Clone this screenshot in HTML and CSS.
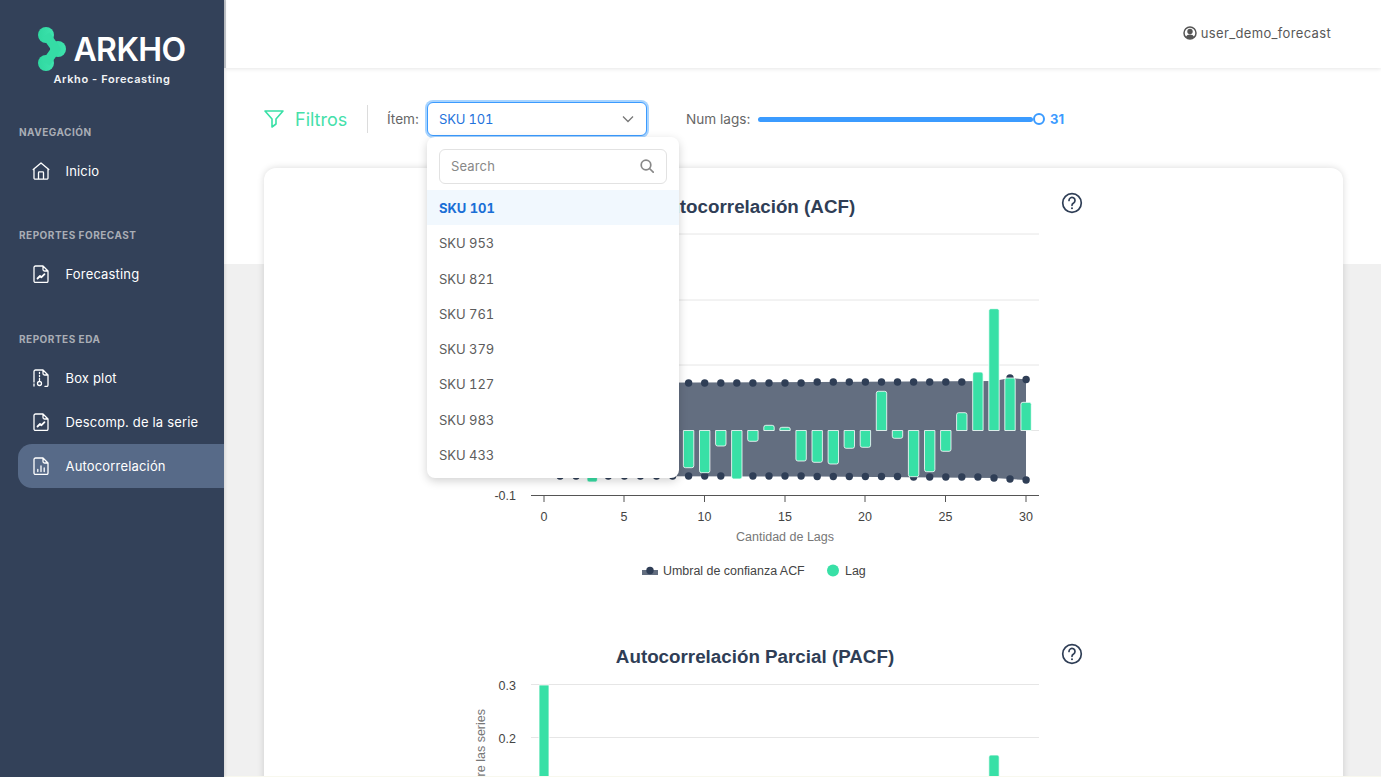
FILE: index.html
```html
<!DOCTYPE html>
<html lang="es">
<head>
  <meta charset="UTF-8">
  <title>Arkho - Forecasting</title>
  <link rel="stylesheet" href="styles.css">
</head>
<body>
  <aside class="sidebar">
    <div class="brand">
      <div class="brand-logo">
        <svg class="brand-mark" viewBox="0 0 28 44" width="28" height="44">
          <defs>
            <linearGradient id="markGrad" x1="0" y1="0" x2="1" y2="0">
              <stop offset="0" stop-color="#2fd8a0"/>
              <stop offset="1" stop-color="#3fe3ae"/>
            </linearGradient>
          </defs>
          <g fill="url(#markGrad)">
            <circle cx="8" cy="8" r="8"/>
            <circle cx="20" cy="22" r="8"/>
            <circle cx="8" cy="36" r="8"/>
          </g>
          <path d="M8 8 L18 22 L8 36" fill="none" stroke="#35dca5" stroke-width="9" stroke-linejoin="round"/>
        </svg>
        <span class="brand-name">ARKHO</span>
      </div>
      <div class="brand-sub">Arkho - Forecasting</div>
    </div>

    <div class="nav-section">
      <div class="nav-label">NAVEGACIÓN</div>
      <a class="nav-item">
        <svg class="nav-icon" viewBox="0 0 18 18"><path d="M1.2 7.600 9 1l7.800 6.600M2 7v9a1.200 1.200 0 0 0 1.200 1.200h11.600A1.200 1.200 0 0 0 16 16V7M6.500 17v-6.300a.8.8 0 0 1 .8-.8h3.400a.8.8 0 0 1 .8.8V17"/></svg>
        Inicio
      </a>
    </div>

    <div class="nav-section">
      <div class="nav-label">REPORTES FORECAST</div>
      <a class="nav-item">
        <svg class="nav-icon" viewBox="0 0 18 18"><path d="M2 2.500A1.500 1.500 0 0 1 3.500 1H11l5 5v10a1.500 1.500 0 0 1-1.500 1.500h-11A1.500 1.500 0 0 1 2 16zM11 1v3.500A1.500 1.500 0 0 0 12.500 6H16"/><path class="nav-icon-bold" d="M5.500 13.500l2.500-2.500 1.500 1.200 3-3"/></svg>
        Forecasting
      </a>
    </div>

    <div class="nav-section">
      <div class="nav-label">REPORTES EDA</div>
      <a class="nav-item">
        <svg class="nav-icon" viewBox="0 0 18 18"><path d="M2 13V2.500A1.500 1.500 0 0 1 3.500 1H11l5 5v10a1.500 1.500 0 0 1-1.500 1.500H13M2 15v2M11 1v3.500A1.500 1.500 0 0 0 12.500 6H16"/><path d="M7.500 3.500v1M7.500 6.500v1M7.500 9.500v2"/><circle cx="7.500" cy="14.500" r="2"/></svg>
        Box plot
      </a>
      <a class="nav-item">
        <svg class="nav-icon" viewBox="0 0 18 18"><path d="M2 2.500A1.500 1.500 0 0 1 3.500 1H11l5 5v10a1.500 1.500 0 0 1-1.500 1.500h-11A1.500 1.500 0 0 1 2 16zM11 1v3.500A1.500 1.500 0 0 0 12.500 6H16"/><path class="nav-icon-bold" d="M5.500 13.500l2.500-2.500 1.500 1.200 3-3"/></svg>
        Descomp. de la serie
      </a>
      <a class="nav-item nav-item-active">
        <svg class="nav-icon" viewBox="0 0 18 18"><path d="M2 2.500A1.500 1.500 0 0 1 3.500 1H11l5 5v10a1.500 1.500 0 0 1-1.500 1.500h-11A1.500 1.500 0 0 1 2 16zM11 1v3.500A1.500 1.500 0 0 0 12.500 6H16"/><path d="M5.800 14.500v-2M9 14.500V9M12.200 14.500v-3.500"/></svg>
        Autocorrelación
      </a>
    </div>
  </aside>

  <div class="main">
    <header class="topbar">
      <svg class="user-icon" viewBox="0 0 14 14" width="14" height="14">
        <circle cx="7" cy="7" r="6" fill="none" stroke="#555" stroke-width="1.500"/>
        <circle cx="7" cy="5.500" r="2.700" fill="#555"/>
        <path d="M2.800 11c.8-1.700 2.400-2.500 4.200-2.500s3.400.8 4.200 2.500c-1 1.200-2.500 2-4.200 2s-3.200-.8-4.200-2z" fill="#555"/>
      </svg>
      <span class="user-name">user_demo_forecast</span>
    </header>

    <div class="content">
      <div class="filters">
        <div class="filters-title">
          <svg viewBox="0 0 20 18" width="20" height="18"><path d="M1 1h18l-7 8v5l-4 3V9z" fill="none" stroke="#38e0a6" stroke-width="1.600" stroke-linejoin="round"/></svg>
          <span>Filtros</span>
        </div>
        <div class="filters-divider"></div>
        <label class="filter-label">Ítem:</label>
        <div class="select-wrap">
          <div class="select-box">
            <span>SKU 101</span>
            <svg viewBox="0 0 12 8" width="12" height="8"><path d="M1 1.500l5 5 5-5" fill="none" stroke="#777" stroke-width="1.300"/></svg>
          </div>
          <div class="dropdown">
            <div class="dropdown-search">
              <span>Search</span>
              <svg viewBox="0 0 14 14" width="14" height="14"><circle cx="6" cy="6" r="4.800" fill="none" stroke="#888" stroke-width="1.700"/><path d="M9.500 9.500l3.700 3.700" stroke="#888" stroke-width="1.700" stroke-linecap="round"/></svg>
            </div>
            <div class="dropdown-option dropdown-option-active">SKU 101</div>
            <div class="dropdown-option">SKU 953</div>
            <div class="dropdown-option">SKU 821</div>
            <div class="dropdown-option">SKU 761</div>
            <div class="dropdown-option">SKU 379</div>
            <div class="dropdown-option">SKU 127</div>
            <div class="dropdown-option">SKU 983</div>
            <div class="dropdown-option">SKU 433</div>
          </div>
        </div>
        <label class="filter-label lags-label">Num lags:</label>
        <div class="slider">
          <div class="slider-track"></div>
          <div class="slider-handle"></div>
        </div>
        <span class="slider-value">31</span>
      </div>

      <section class="card">
        <div class="chart-row">
          <svg class="chart chart-acf" viewBox="471 190 570 400">
            <text class="chart-title" x="755" y="212.500">Autocorrelación (ACF)</text>
            <g class="grid">
              <path d="M531 234H1039M531 300H1039M531 365H1039M531 430.500H1039"/>
            </g>
            <path class="band" d="M560 383L817 382L994 381L1010 378L1026 379.500V480L1010 479L994 478L817 476.500L560 476Z"/>
            <g class="dots">
              <circle cx="688.600" cy="383"/><circle cx="704.700" cy="383"/><circle cx="720.800" cy="383"/><circle cx="736.800" cy="383"/><circle cx="752.900" cy="383"/><circle cx="769" cy="383"/><circle cx="785" cy="383"/><circle cx="801.100" cy="383"/><circle cx="817.200" cy="382"/><circle cx="833.300" cy="382"/><circle cx="849.300" cy="382"/><circle cx="865.400" cy="382"/><circle cx="881.500" cy="382"/><circle cx="897.500" cy="382"/><circle cx="913.600" cy="382"/><circle cx="929.700" cy="382"/><circle cx="945.800" cy="382"/><circle cx="961.800" cy="382"/><circle cx="1010" cy="378"/><circle cx="1026.100" cy="379.500"/>
              <circle cx="560.100" cy="476"/><circle cx="576.100" cy="476"/><circle cx="608.300" cy="476"/><circle cx="624.400" cy="476"/><circle cx="640.400" cy="476"/><circle cx="656.500" cy="476"/><circle cx="672.600" cy="476"/><circle cx="688.600" cy="476"/><circle cx="704.700" cy="476"/><circle cx="720.800" cy="476"/><circle cx="752.900" cy="476"/><circle cx="769" cy="476"/><circle cx="785" cy="476"/><circle cx="801.100" cy="476"/><circle cx="817.200" cy="476.500"/><circle cx="833.300" cy="476.500"/><circle cx="849.300" cy="476.500"/><circle cx="865.400" cy="476.500"/><circle cx="881.500" cy="476.500"/><circle cx="897.500" cy="476.500"/><circle cx="913.600" cy="477"/><circle cx="929.700" cy="477"/><circle cx="945.800" cy="477"/><circle cx="961.800" cy="477"/><circle cx="977.900" cy="477"/><circle cx="994" cy="478"/><circle cx="1010" cy="479"/><circle cx="1026.100" cy="480"/>
            </g>
            <g class="bars">
              <path d="M587 430.500V480q0 2 2 2h6.400q2 0 2-2V430.500z"/>
              <path d="M683.400 430.500V465.700q0 2 2 2h6.400q2 0 2-2V430.500z"/>
              <path d="M699.500 430.500V470.700q0 2 2 2h6.400q2 0 2-2V430.500z"/>
              <path d="M715.600 430.500V444q0 2 2 2h6.400q2 0 2-2V430.500z"/>
              <path d="M731.600 430.500V477q0 2 2 2h6.400q2 0 2-2V430.500z"/>
              <path d="M747.700 430.500V439.300q0 2 2 2h6.400q2 0 2-2V430.500z"/>
              <path d="M763.800 430.500V427.300q0-2 2-2h6.400q2 0 2 2V430.500z"/>
              <path d="M779.800 430.500V429q0-1.700 2-1.700h6.400q2 0 2 1.700V430.500z"/>
              <path d="M795.900 430.500V459q0 2 2 2h6.400q2 0 2-2V430.500z"/>
              <path d="M812 430.500V460.300q0 2 2 2h6.400q2 0 2-2V430.500z"/>
              <path d="M828.100 430.500V462q0 2 2 2h6.400q2 0 2-2V430.500z"/>
              <path d="M844.100 430.500V446.300q0 2 2 2h6.400q2 0 2-2V430.500z"/>
              <path d="M860.200 430.500V445.300q0 2 2 2h6.400q2 0 2-2V430.500z"/>
              <path d="M876.300 430.500V393.300q0-2 2-2h6.400q2 0 2 2V430.500z"/>
              <path d="M892.300 430.500V436.300q0 2 2 2h6.400q2 0 2-2V430.500z"/>
              <path d="M908.400 430.500V474.700q0 2 2 2h6.400q2 0 2-2V430.500z"/>
              <path d="M924.500 430.500V469.700q0 2 2 2h6.400q2 0 2-2V430.500z"/>
              <path d="M940.600 430.500V449.300q0 2 2 2h6.400q2 0 2-2V430.500z"/>
              <path d="M956.600 430.500V414.700q0-2 2-2h6.400q2 0 2 2V430.500z"/>
              <path d="M972.700 430.500V374q0-2 2-2h6.400q2 0 2 2V430.500z"/>
              <path d="M988.800 430.500V310.700q0-2 2-2h6.400q2 0 2 2V430.500z"/>
              <path d="M1004.800 430.500V380q0-2 2-2h6.400q2 0 2 2V430.500z"/>
              <path d="M1020.900 430.500V404.300q0-2 2-2h6.400q2 0 2 2V430.500z"/>
            </g>
            <path class="axis" d="M531 495.500H1039M544 495.500V502M624 495.500V502M704.500 495.500V502M785 495.500V502M865 495.500V502M945.500 495.500V502M1026 495.500V502"/>
            <text class="tick tick-y" x="516" y="500">-0.1</text>
            <g class="tick tick-x">
              <text x="544" y="521">0</text><text x="624" y="521">5</text><text x="704.500" y="521">10</text><text x="785" y="521">15</text><text x="865" y="521">20</text><text x="945.500" y="521">25</text><text x="1026" y="521">30</text>
            </g>
            <text class="axis-name" x="785" y="541">Cantidad de Lags</text>
            <path class="band" d="M642 570H646.500L650 567.500L653.500 570H658V575H642Z"/>
            <circle class="dot-legend" cx="650" cy="570.500" r="3.700"/>
            <text class="legend" x="663" y="575">Umbral de confianza ACF</text>
            <circle class="lag-legend" cx="833" cy="570.500" r="6"/>
            <text class="legend" x="845" y="575">Lag</text>
          </svg>
          <svg class="help help-acf" viewBox="0 0 22 22" width="22" height="22">
            <circle cx="11" cy="11" r="9.300"/>
            <path d="M8 8.500a3 3 0 1 1 4.600 2.500c-1 .6-1.600 1.100-1.600 2.300"/>
            <circle class="help-dot" cx="11" cy="16.300" r="1"/>
          </svg>
        </div>

        <div class="chart-row chart-row-pacf">
          <svg class="chart chart-pacf" viewBox="471 640 570 140">
            <text class="chart-title" x="755" y="662.500">Autocorrelación Parcial (PACF)</text>
            <g class="grid"><path d="M531 684.500H1039M531 737.500H1039"/></g>
            <text class="tick tick-y" x="516" y="690">0.3</text>
            <text class="tick tick-y" x="516" y="743">0.2</text>
            <text class="axis-name axis-name-y" transform="translate(485 709) rotate(-90)">Autocorrelación entre las series</text>
            <g class="bars">
              <path d="M539 685H549V790H539z"/>
              <path d="M988.800 790V757q0-2 2-2h6.400q2 0 2 2V790z"/>
            </g>
          </svg>
          <svg class="help help-pacf" viewBox="0 0 22 22" width="22" height="22">
            <circle cx="11" cy="11" r="9.300"/>
            <path d="M8 8.500a3 3 0 1 1 4.600 2.500c-1 .6-1.600 1.100-1.600 2.300"/>
            <circle class="help-dot" cx="11" cy="16.300" r="1"/>
          </svg>
        </div>
      </section>
    </div>
    <div class="page-edge"></div>
  </div>
</body>
</html>
```

FILE: styles.css
```css
* {
  box-sizing: border-box;
}
html, body {
  height: 100%;
}
body {
  margin: 0;
  display: flex;
  overflow: hidden;
  font-family: Inter, "Noto Sans", sans-serif;
  background: #fff;
}

/* sidebar */
.sidebar {
  width: 224px;
  flex-shrink: 0;
  background: #334159;
  padding: 27px 0 0 18px;
  box-shadow: 1px 0 3px rgba(0, 0, 0, 0.12);
  z-index: 3;
}
.brand {
  margin: 0 0 37px -18px;
  display: flex;
  flex-direction: column;
  align-items: center;
}
.brand-logo {
  display: flex;
  align-items: center;
  height: 44px;
  gap: 7px;
}
.brand-mark {
  display: block;
}
.brand-name {
  color: #fff;
  font-size: 32px;
  font-weight: 600;
  line-height: 44px;
  letter-spacing: -0.6px;
  margin-top: 1px;
}
.brand-sub {
  color: #f2f4f6;
  font-size: 11px;
  font-weight: 600;
  line-height: 16px;
  letter-spacing: 0.6px;
}
.nav-section {
  margin-bottom: 34.7px;
}
.nav-label {
  color: #a9adb5;
  font-size: 10px;
  font-weight: 700;
  line-height: 16px;
  letter-spacing: 0.5px;
  padding-left: 1px;
  margin-bottom: 8.8px;
}
.nav-item {
  display: flex;
  align-items: center;
  height: 44px;
  padding-left: 14px;
  gap: 15.5px;
  color: #fff;
  font-size: 13px;
  letter-spacing: 0.17px;
  border-radius: 14px 0 0 14px;
}
.nav-item-active {
  background: #576a88;
}
.nav-icon {
  width: 18px;
  height: 18px;
  fill: none;
  stroke: #fff;
  stroke-width: 1.3;
  stroke-linecap: round;
  stroke-linejoin: round;
}
.nav-icon-bold {
  stroke-width: 1.8;
}

/* main column */
.main {
  flex: 1;
  min-width: 0;
  height: 100vh;
  display: flex;
  flex-direction: column;
}
.topbar {
  height: 68px;
  flex-shrink: 0;
  display: flex;
  justify-content: flex-end;
  align-items: center;
  gap: 4px;
  padding: 0 50px 2px 0;
  background: #fff;
  border-left: 2px solid #c6c9ce;
  box-shadow: 0 1px 4px rgba(0, 0, 0, 0.1);
  z-index: 2;
}
.user-icon {
  display: block;
}
.user-name {
  color: #585858;
  font-size: 13px;
  letter-spacing: 0.34px;
}
.content {
  flex: 1;
  min-height: 0;
  overflow: hidden;
  padding: 0 38px 0 40px;
  background: linear-gradient(#fff 196px, #f0f0f0 196px);
}
.page-edge {
  height: 1px;
  flex-shrink: 0;
  background: #f8f8ee;
}

/* filters */
.filters {
  height: 100px;
  display: flex;
  align-items: center;
  padding-top: 2px;
}
.filters-title {
  display: flex;
  align-items: center;
  gap: 11px;
  color: #45e0aa;
  font-size: 18px;
  width: 103px;
}
.filters-divider {
  width: 1px;
  height: 28px;
  background: #dcdcdc;
}
.filter-label {
  width: 32px;
  color: #666;
  font-size: 13.6px;
  white-space: nowrap;
  margin-left: 19px;
}
.select-wrap {
  position: relative;
  margin-left: 8px;
  width: 220px;
}
.select-box {
  height: 34px;
  display: flex;
  align-items: center;
  justify-content: space-between;
  padding: 0 12px 0 11px;
  color: #1f73dc;
  font-size: 13px;
  font-variant-numeric: tabular-nums;
  letter-spacing: -0.2px;
  background: #fff;
  border: 1px solid #3b9bff;
  border-radius: 6px;
  box-shadow: 0 0 0 2px #a8d4ff;
}
.dropdown {
  position: absolute;
  top: 35px;
  left: 0;
  width: 252px;
  padding: 12px 0 6px;
  background: #fff;
  border-radius: 8px;
  box-shadow: 0 3px 10px rgba(0, 0, 0, 0.18);
  z-index: 5;
}
.dropdown-search {
  height: 35px;
  margin: 0 12px 6px;
  padding: 0 12px 2px 11px;
  display: flex;
  align-items: center;
  justify-content: space-between;
  color: #888;
  font-size: 13px;
  letter-spacing: 0.15px;
  border: 1px solid #e2e2e2;
  border-radius: 6px;
}
.dropdown-option {
  height: 35.3px;
  line-height: 36px;
  padding-left: 12px;
  color: #5c5c5c;
  font-size: 13px;
  font-variant-numeric: tabular-nums;
  letter-spacing: -0.05px;
}
.dropdown-option-active {
  background: #f1f8fe;
  color: #1a6fd6;
  font-weight: 700;
}
.lags-label {
  width: 63px;
  margin-left: 39px;
}
.slider {
  width: 287px;
  margin-left: 9px;
  display: flex;
  align-items: center;
}
.slider-track {
  flex: 1;
  height: 5px;
  background: #3b9bff;
  border-radius: 3px;
}
.slider-handle {
  width: 12px;
  height: 12px;
  background: #fff;
  border: 2px solid #3b9bff;
  border-radius: 50%;
}
.slider-value {
  margin-left: 5px;
  color: #3b9bff;
  font-size: 13px;
  font-weight: 700;
}

/* card with charts */
.card {
  background: #fff;
  border-radius: 12px;
  box-shadow: 0 0 7px rgba(0, 0, 0, 0.15);
  padding: 22px 0 0 207px;
  height: 640px;
}
.chart-row {
  display: flex;
  align-items: flex-start;
  gap: 19.5px;
}
.chart-row-pacf {
  margin-top: 50px;
}
.chart {
  display: block;
  flex-shrink: 0;
  font-family: "Liberation Sans", Arial, sans-serif;
}
.chart-acf {
  width: 570px;
  height: 400px;
}
.chart-pacf {
  width: 570px;
  height: 140px;
}
.chart-title {
  fill: #2f3e56;
  font-size: 18.8px;
  font-weight: 700;
  text-anchor: middle;
}
.grid path {
  fill: none;
  stroke: #e6e6e6;
  stroke-width: 1;
}
.band {
  fill: #2f3e56;
  fill-opacity: 0.75;
}
.dots circle {
  r: 3.7px;
  fill: #2f3e56;
}
.bars path {
  fill: #38e0a6;
  stroke: #fff;
  stroke-width: 0.8;
}
.axis {
  fill: none;
  stroke: #555;
  stroke-width: 1;
}
.tick {
  fill: #444;
  font-size: 12.5px;
}
.tick-y {
  text-anchor: end;
}
.tick-x text {
  text-anchor: middle;
}
.axis-name {
  fill: #777;
  font-size: 12.5px;
  text-anchor: middle;
}
.axis-name-y {
  text-anchor: end;
}
.legend {
  fill: #444;
  font-size: 12.45px;
}
.dot-legend {
  fill: #2f3e56;
}
.lag-legend {
  fill: #38e0a6;
}
.help {
  display: block;
  flex-shrink: 0;
  fill: none;
  stroke: #2f3e56;
  stroke-width: 1.7;
  stroke-linecap: round;
}
.help-acf {
  margin-top: 2px;
}
.help-pacf {
  margin-top: 3px;
}
.help-dot {
  fill: #2f3e56;
  stroke: none;
}
```
